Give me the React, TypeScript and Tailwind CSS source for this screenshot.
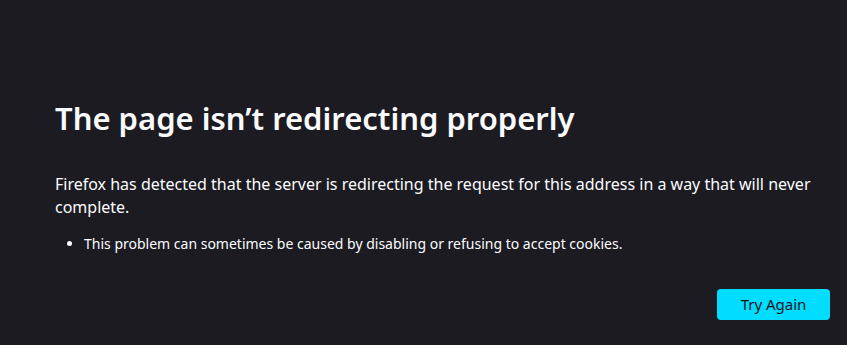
export default function App() {
  return (
    <div
      className="min-h-[345px] w-full bg-[#1c1b22] text-[#fbfbfe]"
      style={{ fontFamily: '"Noto Sans", "Open Sans", sans-serif' }}
    >
      <div className="ml-[55px] w-[775px] pt-[92px]">
        <h1 className="text-[31px] font-semibold leading-[52px]">
          The page isn’t redirecting properly
        </h1>
        <p className="mt-[29px] text-[16px] leading-[23px]">
          Firefox has detected that the server is redirecting the request for this address in a way that will never complete.
        </p>
        <ul className="mt-[15px] list-disc pl-[29px] text-[14px] leading-[20px]">
          <li>This problem can sometimes be caused by disabling or refusing to accept cookies.</li>
        </ul>
        <div className="mt-[35px] flex justify-end">
          <button className="h-[31px] w-[113px] rounded-[4px] bg-[#00ddff] text-[15px] text-[#15141a]">
            Try Again
          </button>
        </div>
      </div>
    </div>
  );
}
